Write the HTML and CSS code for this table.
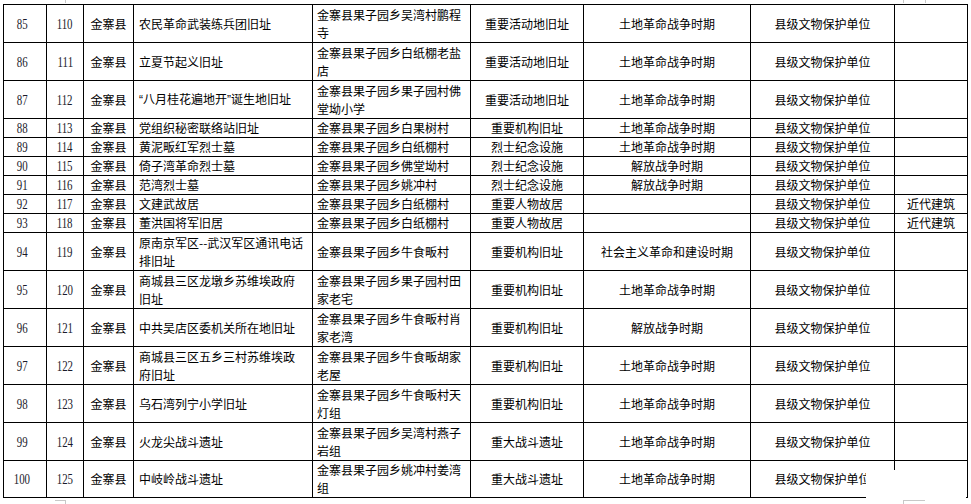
FILE: index.html
```html
<!DOCTYPE html>
<html lang="zh-CN">
<head>
<meta charset="utf-8">
<title>文物保护单位名录</title>
<link rel="stylesheet" href="styles.css">
</head>
<body>
<div class="sheet">
  <table class="grid">
    <colgroup>
      <col class="c1"><col class="c2"><col class="c3"><col class="c4"><col class="c5"><col class="c6"><col class="c7"><col class="c8"><col class="c9">
    </colgroup>
    <tbody>
      <tr class="r2"><td class="n1"><span class="num">85</span></td><td class="n2"><span class="num">110</span></td><td>金寨县</td><td class="name">农民革命武装练兵团旧址</td><td class="addr">金寨县果子园乡吴湾村鹏程寺</td><td>重要活动地旧址</td><td>土地革命战争时期</td><td>县级文物保护单位</td><td></td></tr>
      <tr class="r2"><td class="n1"><span class="num">86</span></td><td class="n2"><span class="num">111</span></td><td>金寨县</td><td class="name">立夏节起义旧址</td><td class="addr">金寨县果子园乡白纸棚老盐店</td><td>重要活动地旧址</td><td>土地革命战争时期</td><td>县级文物保护单位</td><td></td></tr>
      <tr class="r2"><td class="n1"><span class="num">87</span></td><td class="n2"><span class="num">112</span></td><td>金寨县</td><td class="name"><span class="q">“</span>八月桂花遍地开<span class="q">”</span>诞生地旧址</td><td class="addr">金寨县果子园乡果子园村佛堂坳小学</td><td>重要活动地旧址</td><td>土地革命战争时期</td><td>县级文物保护单位</td><td></td></tr>
      <tr class="r1"><td class="n1"><span class="num">88</span></td><td class="n2"><span class="num">113</span></td><td>金寨县</td><td class="name">党组织秘密联络站旧址</td><td class="addr">金寨县果子园乡白果树村</td><td>重要机构旧址</td><td>土地革命战争时期</td><td>县级文物保护单位</td><td></td></tr>
      <tr class="r1"><td class="n1"><span class="num">89</span></td><td class="n2"><span class="num">114</span></td><td>金寨县</td><td class="name">黄泥畈红军烈士墓</td><td class="addr">金寨县果子园乡白纸棚村</td><td>烈士纪念设施</td><td>土地革命战争时期</td><td>县级文物保护单位</td><td></td></tr>
      <tr class="r1"><td class="n1"><span class="num">90</span></td><td class="n2"><span class="num">115</span></td><td>金寨县</td><td class="name">倚子湾革命烈士墓</td><td class="addr">金寨县果子园乡佛堂坳村</td><td>烈士纪念设施</td><td>解放战争时期</td><td>县级文物保护单位</td><td></td></tr>
      <tr class="r1"><td class="n1"><span class="num">91</span></td><td class="n2"><span class="num">116</span></td><td>金寨县</td><td class="name">范湾烈士墓</td><td class="addr">金寨县果子园乡姚冲村</td><td>烈士纪念设施</td><td>解放战争时期</td><td>县级文物保护单位</td><td></td></tr>
      <tr class="r1"><td class="n1"><span class="num">92</span></td><td class="n2"><span class="num">117</span></td><td>金寨县</td><td class="name">文建武故居</td><td class="addr">金寨县果子园乡白纸棚村</td><td>重要人物故居</td><td></td><td>县级文物保护单位</td><td>近代建筑</td></tr>
      <tr class="r1"><td class="n1"><span class="num">93</span></td><td class="n2"><span class="num">118</span></td><td>金寨县</td><td class="name">董洪国将军旧居</td><td class="addr">金寨县果子园乡白纸棚村</td><td>重要人物故居</td><td></td><td>县级文物保护单位</td><td>近代建筑</td></tr>
      <tr class="r2"><td class="n1"><span class="num">94</span></td><td class="n2"><span class="num">119</span></td><td>金寨县</td><td class="name">原南京军区--武汉军区通讯电话排旧址</td><td class="addr">金寨县果子园乡牛食畈村</td><td>重要机构旧址</td><td>社会主义革命和建设时期</td><td>县级文物保护单位</td><td></td></tr>
      <tr class="r2"><td class="n1"><span class="num">95</span></td><td class="n2"><span class="num">120</span></td><td>金寨县</td><td class="name">商城县三区龙墩乡苏维埃政府旧址</td><td class="addr">金寨县果子园乡果子园村田家老宅</td><td>重要机构旧址</td><td>土地革命战争时期</td><td>县级文物保护单位</td><td></td></tr>
      <tr class="r2"><td class="n1"><span class="num">96</span></td><td class="n2"><span class="num">121</span></td><td>金寨县</td><td class="name">中共吴店区委机关所在地旧址</td><td class="addr">金寨县果子园乡牛食畈村肖家老湾</td><td>重要机构旧址</td><td>解放战争时期</td><td>县级文物保护单位</td><td></td></tr>
      <tr class="r2"><td class="n1"><span class="num">97</span></td><td class="n2"><span class="num">122</span></td><td>金寨县</td><td class="name">商城县三区五乡三村苏维埃政府旧址</td><td class="addr">金寨县果子园乡牛食畈胡家老屋</td><td>重要机构旧址</td><td>土地革命战争时期</td><td>县级文物保护单位</td><td></td></tr>
      <tr class="r2"><td class="n1"><span class="num">98</span></td><td class="n2"><span class="num">123</span></td><td>金寨县</td><td class="name">乌石湾列宁小学旧址</td><td class="addr">金寨县果子园乡牛食畈村天灯组</td><td>重要机构旧址</td><td>土地革命战争时期</td><td>县级文物保护单位</td><td></td></tr>
      <tr class="r2"><td class="n1"><span class="num">99</span></td><td class="n2"><span class="num">124</span></td><td>金寨县</td><td class="name">火龙尖战斗遗址</td><td class="addr">金寨县果子园乡吴湾村燕子岩组</td><td>重大战斗遗址</td><td>土地革命战争时期</td><td>县级文物保护单位</td><td></td></tr>
      <tr class="r2 last"><td class="n1"><span class="num">100</span></td><td class="n2"><span class="num">125</span></td><td>金寨县</td><td class="name">中岐岭战斗遗址</td><td class="addr">金寨县果子园乡姚冲村姜湾组</td><td>重大战斗遗址</td><td>土地革命战争时期</td><td>县级文物保护单位</td><td></td></tr>
    </tbody>
  </table>
  <div class="mask"></div>
  <div class="mark mark-tl"></div>
  <div class="mark mark-tr"></div>
  <div class="mark mark-bl"></div>
  <div class="mark mark-br"></div>
</div>
</body>
</html>
```
FILE: styles.css
```css
html, body {
  margin: 0;
  padding: 0;
  background: #fff;
}

.sheet {
  position: relative;
  width: 971px;
  height: 504px;
  overflow: hidden;
  background: #fff;
}

.grid {
  border-collapse: collapse;
  table-layout: fixed;
  width: 964px;
  margin: 4px 0 0 3px;
}

.c1 { width: 43px; }
.c2 { width: 37px; }
.c3 { width: 50px; }
.c4 { width: 179px; }
.c5 { width: 158px; }
.c6 { width: 113px; }
.c7 { width: 167px; }
.c8 { width: 144px; }
.c9 { width: 73px; }

.grid td {
  border: 1px solid #000;
  padding: 0 2px;
  font-family: "Noto Sans CJK SC", "Noto Sans", sans-serif;
  font-size: 12px;
  line-height: 18px;
  color: #000;
  text-align: center;
  vertical-align: middle;
  overflow: hidden;
  white-space: normal;
}

.r1 { height: 19px; }
.r2 { height: 38px; }
.last { height: 37px; }

.grid td.n1 { padding: 0 6px 0 0; }
.grid td.n2 { padding: 0; }

.num {
  display: inline-block;
  font-family: "Liberation Serif", "Times New Roman", serif;
  font-size: 14.5px;
  line-height: 18px;
  color: #1a1a2a;
  transform: scaleX(0.75);
}

.q {
  font-family: "Liberation Sans", Arial, sans-serif;
  font-size: 12px;
}

.grid td.name {
  text-align: left;
  padding: 0 7px 0 5px;
}

.grid td.addr {
  text-align: left;
  padding: 0 4px 0 4px;
}

.mask {
  position: absolute;
  left: 866px;
  top: 470px;
  width: 100px;
  height: 34px;
  background: #fff;
}

.mark {
  position: absolute;
  border-color: #c8c8c8;
  border-style: solid;
  border-width: 0;
}

.mark-tl {
  left: 65px;
  top: 0;
  width: 0;
  height: 3px;
  border-left-width: 1px;
}

.mark-tr {
  left: 903px;
  top: 0;
  width: 21px;
  height: 3px;
  border-left-width: 1px;
  border-right-width: 1px;
}

.mark-bl {
  left: 55px;
  top: 500px;
  width: 10px;
  height: 4px;
  border-top-width: 1px;
  border-right-width: 1px;
}

.mark-br {
  left: 903px;
  top: 500px;
  width: 21px;
  height: 4px;
  border-top-width: 1px;
  border-left-width: 1px;
}
```
